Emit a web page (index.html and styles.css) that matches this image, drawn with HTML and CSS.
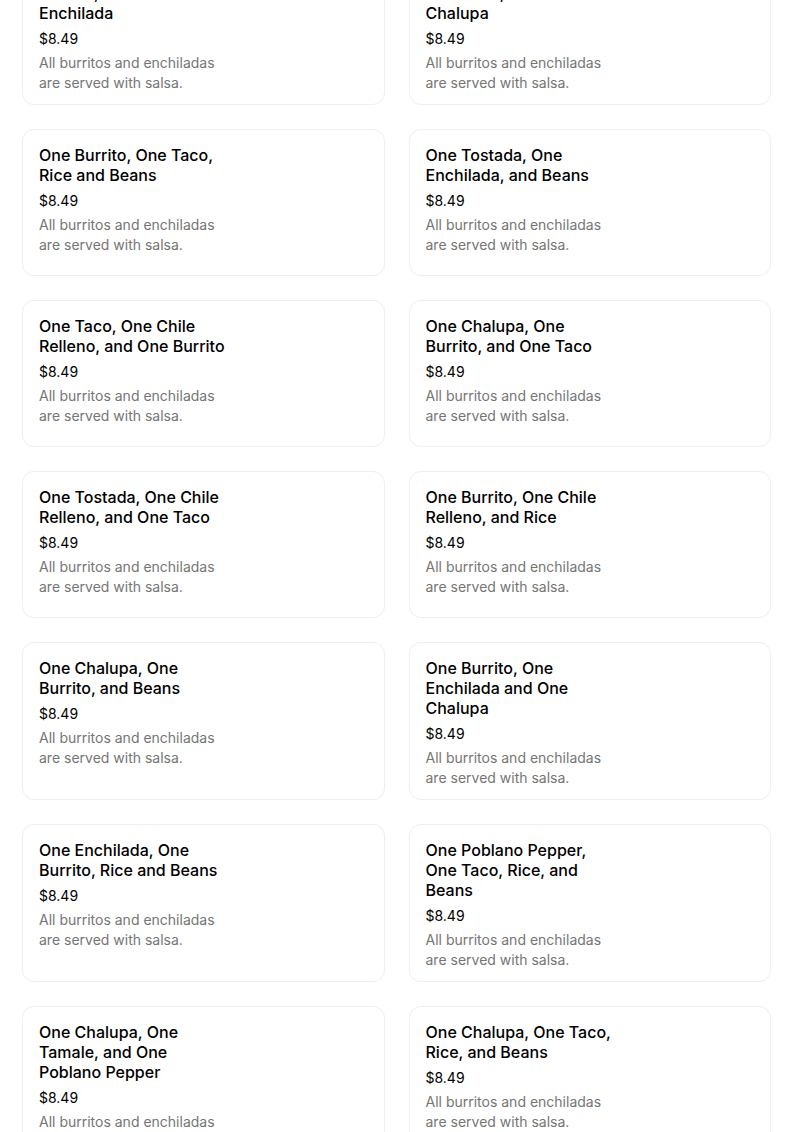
FILE: index.html
```html
<!DOCTYPE html>
<html lang="en">
<head>
<meta charset="utf-8">
<title>Combos</title>
<link rel="stylesheet" href="styles.css">
</head>
<body>
<main class="menu">
  <ul class="grid">
    <li class="card"><div class="info"><h3 class="title">One Chalupa, One Tamale, and One Enchilada</h3><div class="price">$8.49</div><p class="desc">All burritos and enchiladas are served with salsa.</p></div></li>
    <li class="card"><div class="info"><h3 class="title">One Burrito, One Enchilada, and One Chalupa</h3><div class="price">$8.49</div><p class="desc">All burritos and enchiladas are served with salsa.</p></div></li>
    <li class="card"><div class="info"><h3 class="title">One Burrito, One Taco, Rice and Beans</h3><div class="price">$8.49</div><p class="desc">All burritos and enchiladas are served with salsa.</p></div></li>
    <li class="card"><div class="info"><h3 class="title">One Tostada, One Enchilada, and Beans</h3><div class="price">$8.49</div><p class="desc">All burritos and enchiladas are served with salsa.</p></div></li>
    <li class="card"><div class="info"><h3 class="title">One Taco, One Chile Relleno, and One Burrito</h3><div class="price">$8.49</div><p class="desc">All burritos and enchiladas are served with salsa.</p></div></li>
    <li class="card"><div class="info"><h3 class="title">One Chalupa, One Burrito, and One Taco</h3><div class="price">$8.49</div><p class="desc">All burritos and enchiladas are served with salsa.</p></div></li>
    <li class="card"><div class="info"><h3 class="title">One Tostada, One Chile Relleno, and One Taco</h3><div class="price">$8.49</div><p class="desc">All burritos and enchiladas are served with salsa.</p></div></li>
    <li class="card"><div class="info"><h3 class="title">One Burrito, One Chile Relleno, and Rice</h3><div class="price">$8.49</div><p class="desc">All burritos and enchiladas are served with salsa.</p></div></li>
    <li class="card"><div class="info"><h3 class="title">One Chalupa, One Burrito, and Beans</h3><div class="price">$8.49</div><p class="desc">All burritos and enchiladas are served with salsa.</p></div></li>
    <li class="card"><div class="info"><h3 class="title">One Burrito, One Enchilada and One Chalupa</h3><div class="price">$8.49</div><p class="desc">All burritos and enchiladas are served with salsa.</p></div></li>
    <li class="card"><div class="info"><h3 class="title">One Enchilada, One Burrito, Rice and Beans</h3><div class="price">$8.49</div><p class="desc">All burritos and enchiladas are served with salsa.</p></div></li>
    <li class="card"><div class="info"><h3 class="title">One Poblano Pepper, One Taco, Rice, and Beans</h3><div class="price">$8.49</div><p class="desc">All burritos and enchiladas are served with salsa.</p></div></li>
    <li class="card"><div class="info"><h3 class="title">One Chalupa, One Tamale, and One Poblano Pepper</h3><div class="price">$8.49</div><p class="desc">All burritos and enchiladas are served with salsa.</p></div></li>
    <li class="card"><div class="info"><h3 class="title">One Chalupa, One Taco, Rice, and Beans</h3><div class="price">$8.49</div><p class="desc">All burritos and enchiladas are served with salsa.</p></div></li>
  </ul>
</main>
</body>
</html>
```
FILE: styles.css
```css
html, body {
  margin: 0;
  padding: 0;
  background: #ffffff;
}

body {
  font-family: Inter, Roboto, "Liberation Sans", Arial, sans-serif;
  color: #000000;
  -webkit-font-smoothing: antialiased;
}

.menu {
  padding: 0 33px 40px 22px;
  margin-top: -53px;
}

.grid {
  list-style: none;
  margin: 0;
  padding: 0;
  display: grid;
  grid-template-columns: 1fr 1fr;
  column-gap: 24px;
  row-gap: 24px;
}

.card {
  box-sizing: border-box;
  min-height: 147px;
  border: 1px solid #efefef;
  border-radius: 12px;
  box-shadow: 0 0 1px rgba(0, 0, 0, 0.04);
  padding: 15px 16px 11px 16px;
  display: flex;
}

.info {
  width: 190px;
  display: flex;
  flex-direction: column;
}

.title {
  margin: 0;
  font-size: 16px;
  line-height: 20px;
  font-weight: 500;
  color: #000000;
}

.price {
  margin-top: 6px;
  font-size: 14px;
  line-height: 20px;
  color: #000000;
}

.desc {
  margin: 4px 0 0 0;
  font-size: 14px;
  line-height: 20px;
  color: #757575;
}
```
